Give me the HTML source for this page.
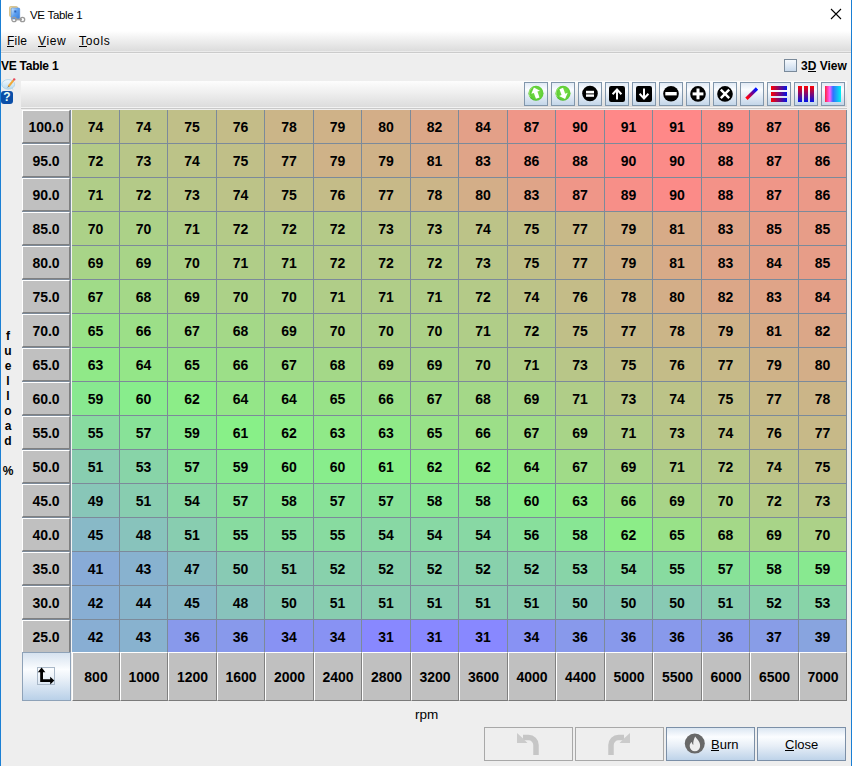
<!DOCTYPE html><html><head><meta charset="utf-8"><style>
*{margin:0;padding:0;box-sizing:border-box}
html,body{width:852px;height:766px;overflow:hidden;background:#eeeeee;font-family:"Liberation Sans",sans-serif;color:#000}
.a{position:absolute}
.t{position:absolute;white-space:nowrap;line-height:1}
.c{position:absolute;font-weight:bold;font-size:14px;text-align:center;line-height:35px}
.rh{position:absolute;background:#c0c0c0;border-left:1px solid #fff;border-top:1px solid #fff;border-right:1px solid #808080;border-bottom:1px solid #808080;font-weight:bold;font-size:14px;text-align:center;line-height:33px}
.ch{position:absolute;background:#c0c0c0;border-left:1px solid #fff;border-top:1px solid #fff;border-right:1px solid #808080;border-bottom:1px solid #7a7a7a;font-weight:bold;font-size:14px;text-align:center;line-height:48px}
.tb{position:absolute;top:82px;width:24px;height:24px;border:1px solid #8196ab;background:linear-gradient(#e2ebf5,#fafcff 30%,#e6eef7 55%,#c4d6e9)}
.btn{position:absolute;top:727px;height:34px;border:1px solid #7b8fa7;background:linear-gradient(#dbe6f2,#fbfdff 28%,#e8eff7 55%,#bed3e9);font-size:13px}
.dis{position:absolute;top:727px;height:34px;border:1px solid #a8a8a8;background:#eeeeee}
u{text-decoration:none;border-bottom:1px solid #000}
</style></head><body>
<div class="a" style="left:0;top:0;width:852px;height:31px;background:#fff"></div>
<div class="a" style="left:0;top:31px;width:852px;height:20px;background:linear-gradient(#ffffff,#f2f2f2 35%,#dcdcdc)"></div>
<div class="a" style="left:0;top:51px;width:852px;height:1px;background:#ebebeb"></div>
<div class="a" style="left:0;top:52px;width:852px;height:1px;background:#cbcbcb"></div>
<div class="a" style="left:0;top:53px;width:852px;height:1px;background:#f4f4f4"></div>
<svg class="a" style="left:8px;top:5px" width="18" height="18" viewBox="0 0 18 18">
<defs><linearGradient id="dg" x1="0" y1="0" x2="1" y2="1"><stop offset="0" stop-color="#d8ecff"/><stop offset="0.5" stop-color="#5a9ef0"/><stop offset="1" stop-color="#3a7ed8"/></linearGradient></defs>
<rect x="1.5" y="1.5" width="8" height="10" rx="1" fill="#e8d49c" stroke="#d2ba80" stroke-width="0.8"/>
<rect x="3.2" y="3" width="8.5" height="11" rx="1" fill="url(#dg)" stroke="#4a88d8" stroke-width="0.6"/>
<rect x="6.3" y="5.5" width="2" height="2" fill="#2a62b8"/>
<path d="M7 14.5h7" stroke="#a0a0a0" stroke-width="1.8"/>
<circle cx="6" cy="14.5" r="2.2" fill="none" stroke="#9a9a9a" stroke-width="1.3"/>
<circle cx="14.5" cy="14.5" r="2.2" fill="none" stroke="#9a9a9a" stroke-width="1.3"/>
</svg>
<div class="t" style="left:30px;top:9.5px;font-size:11.5px;letter-spacing:-0.3px">VE Table 1</div>
<svg class="a" style="left:830px;top:8px" width="12" height="12" viewBox="0 0 12 12"><path d="M1 1L11 11M11 1L1 11" stroke="#000" stroke-width="1.1"/></svg>
<div class="t" style="left:7px;top:35px;font-size:12px;letter-spacing:0.2px">File</div>
<div class="t" style="left:38px;top:35px;font-size:12px;letter-spacing:0.6px">View</div>
<div class="t" style="left:79px;top:35px;font-size:12px;letter-spacing:0.7px">Tools</div>
<div class="a" style="left:7px;top:46px;width:7px;height:1px;background:#000"></div>
<div class="a" style="left:38px;top:46px;width:8px;height:1px;background:#000"></div>
<div class="a" style="left:79px;top:46px;width:8px;height:1px;background:#000"></div>
<div class="t" style="left:1px;top:60px;font-size:12px;font-weight:bold;letter-spacing:-0.25px">VE Table 1</div>
<div class="a" style="left:784px;top:59px;width:13px;height:13px;border:1px solid #7a8a9a;background:linear-gradient(#f7fafd,#c8d9ec)"></div>
<div class="t" style="left:801px;top:60px;font-size:12px;font-weight:bold">3D View</div>
<div class="a" style="left:808px;top:71px;width:8px;height:1px;background:#000"></div>
<svg class="a" style="left:1px;top:77px" width="16" height="14" viewBox="0 0 16 14">
<defs><linearGradient id="bg1" x1="0" y1="0" x2="0" y2="1"><stop offset="0" stop-color="#f4faff"/><stop offset="1" stop-color="#b6d9ee"/></linearGradient></defs>
<ellipse cx="7.2" cy="7.4" rx="6.4" ry="4.8" fill="url(#bg1)" stroke="#a8cfe4" stroke-width="0.8"/>
<path d="M10 11.5l2.5 1.5-1-2.5z" fill="#b6d9ee"/>
<path d="M7.5 9.5L12.6 3.2" stroke="#f0a838" stroke-width="2"/>
<path d="M6.8 10.4l0.9-1.3" stroke="#777" stroke-width="1"/>
<circle cx="13.2" cy="2.4" r="1.2" fill="#e84858"/>
</svg>
<div class="a" style="left:1px;top:91px;width:12px;height:13px;border-radius:3px;background:#0b4fa8;color:#e8fff8;font-weight:bold;font-size:12px;line-height:13px;text-align:center">?</div>
<div class="a" style="left:21px;top:81px;width:826px;height:26px;background:linear-gradient(#fdfdfd,#efefef 45%,#dcdcdc)"></div>
<div class="a" style="left:21px;top:107px;width:826px;height:1px;background:#f2f2f2"></div>
<div class="a" style="left:21px;top:108px;width:826px;height:1px;background:#c9c9c9"></div>
<div class="tb" style="left:524px"></div>
<div class="tb" style="left:551px"></div>
<div class="tb" style="left:578px"></div>
<div class="tb" style="left:605px"></div>
<div class="tb" style="left:632px"></div>
<div class="tb" style="left:659px"></div>
<div class="tb" style="left:686px"></div>
<div class="tb" style="left:713px"></div>
<div class="tb" style="left:740px"></div>
<div class="tb" style="left:767px"></div>
<div class="tb" style="left:794px"></div>
<div class="tb" style="left:821px"></div>
<svg class="a" style="left:524px;top:82px" width="24" height="24" viewBox="0 0 24 24"><defs><radialGradient id="g1" cx="0.55" cy="0.45" r="0.6"><stop offset="0" stop-color="#7ee04c"/><stop offset="0.8" stop-color="#5ccc34"/><stop offset="1" stop-color="#3fa824"/></radialGradient></defs><circle cx="12" cy="11.3" r="7.5" fill="url(#g1)"/><path d="M6.2 15a6.8 6.8 0 0 1 2.2-9.6" stroke="#a8ec80" stroke-width="0.9" fill="none"/><path d="M12 5.2L16.6 10.2H13.9V16.4H10.1V10.2H7.4z" fill="#fff" transform="rotate(-20 12 11.3)"/></svg>
<svg class="a" style="left:551px;top:82px" width="24" height="24" viewBox="0 0 24 24"><defs><radialGradient id="g2" cx="0.55" cy="0.45" r="0.6"><stop offset="0" stop-color="#7ee04c"/><stop offset="0.8" stop-color="#5ccc34"/><stop offset="1" stop-color="#3fa824"/></radialGradient></defs><circle cx="12" cy="11.3" r="7.5" fill="url(#g2)"/><path d="M6.2 15a6.8 6.8 0 0 1 2.2-9.6" stroke="#a8ec80" stroke-width="0.9" fill="none"/><path d="M12 17.4L16.6 12.4H13.9V6.2H10.1V12.4H7.4z" fill="#fff" transform="rotate(-20 12 11.3)"/></svg>
<svg class="a" style="left:578px;top:82px" width="24" height="24" viewBox="0 0 24 24"><circle cx="12" cy="11.5" r="7.8" fill="#000"/><rect x="8" y="8.8" width="8" height="2.6" fill="#fff"/><rect x="8" y="12.4" width="8" height="2.4" fill="#fff"/></svg>
<svg class="a" style="left:605px;top:82px" width="24" height="24" viewBox="0 0 24 24"><rect x="4" y="4" width="16" height="16" rx="2.2" fill="#000"/><path d="M12 17.5V7.5M7.6 12.2L12 7.5l4.4 4.7" fill="none" stroke="#fff" stroke-width="2"/></svg>
<svg class="a" style="left:632px;top:82px" width="24" height="24" viewBox="0 0 24 24"><rect x="4" y="4" width="16" height="16" rx="2.2" fill="#000"/><path d="M12 6.5v10M7.6 11.8L12 16.5l4.4-4.7" fill="none" stroke="#fff" stroke-width="2"/></svg>
<svg class="a" style="left:659px;top:82px" width="24" height="24" viewBox="0 0 24 24"><circle cx="12" cy="11.7" r="7.8" fill="#000"/><rect x="6.3" y="10" width="11.4" height="3.4" fill="#fff"/></svg>
<svg class="a" style="left:686px;top:82px" width="24" height="24" viewBox="0 0 24 24"><circle cx="12" cy="11.9" r="7.8" fill="#000"/><rect x="6.6" y="10.4" width="10.8" height="3" fill="#fff"/><rect x="10.5" y="6.5" width="3" height="10.8" fill="#fff"/></svg>
<svg class="a" style="left:713px;top:82px" width="24" height="24" viewBox="0 0 24 24"><circle cx="12" cy="11.9" r="7.8" fill="#000"/><path d="M7.8 7.7l8.4 8.4M16.2 7.7l-8.4 8.4" stroke="#fff" stroke-width="2.4"/></svg>
<svg class="a" style="left:740px;top:82px" width="24" height="24" viewBox="0 0 24 24"><defs><linearGradient id="pg" x1="0" y1="1" x2="1" y2="0"><stop offset="0" stop-color="#ff0010"/><stop offset="0.5" stop-color="#800080"/><stop offset="1" stop-color="#0010ff"/></linearGradient></defs><path d="M7.6 15.6L15.8 7.6" stroke="url(#pg)" stroke-width="3.3" stroke-linecap="square"/></svg>
<svg class="a" style="left:767px;top:82px" width="24" height="24" viewBox="0 0 24 24"><defs><linearGradient id="hg"><stop offset="0" stop-color="#ff0000"/><stop offset="1" stop-color="#0014e6"/></linearGradient></defs><rect x="4" y="4" width="16" height="4" fill="url(#hg)"/><rect x="4" y="10" width="16" height="4" fill="url(#hg)"/><rect x="4" y="16" width="16" height="4" fill="url(#hg)"/></svg>
<svg class="a" style="left:794px;top:82px" width="24" height="24" viewBox="0 0 24 24"><defs><linearGradient id="vg" x1="0" y1="0" x2="0" y2="1"><stop offset="0" stop-color="#ff0000"/><stop offset="1" stop-color="#0014e6"/></linearGradient></defs><rect x="4" y="4" width="4" height="16" fill="url(#vg)"/><rect x="10" y="4" width="4" height="16" fill="url(#vg)"/><rect x="16" y="4" width="4" height="16" fill="url(#vg)"/></svg>
<svg class="a" style="left:821px;top:82px" width="24" height="24" viewBox="0 0 24 24"><defs><linearGradient id="gg"><stop offset="0" stop-color="#ff2040"/><stop offset="0.3" stop-color="#ff60ff"/><stop offset="0.5" stop-color="#3070ff"/><stop offset="1" stop-color="#00f0f0"/></linearGradient></defs><rect x="4" y="4" width="16" height="16" fill="url(#gg)"/></svg>
<div class="rh" style="left:22px;top:110px;width:48px;height:33px">100.0</div>
<div class="a" style="left:22px;top:143px;width:48px;height:1px;background:#7c8a9a"></div>
<div class="rh" style="left:22px;top:144px;width:48px;height:33px">95.0</div>
<div class="a" style="left:22px;top:177px;width:48px;height:1px;background:#7c8a9a"></div>
<div class="rh" style="left:22px;top:178px;width:48px;height:33px">90.0</div>
<div class="a" style="left:22px;top:211px;width:48px;height:1px;background:#7c8a9a"></div>
<div class="rh" style="left:22px;top:212px;width:48px;height:33px">85.0</div>
<div class="a" style="left:22px;top:245px;width:48px;height:1px;background:#7c8a9a"></div>
<div class="rh" style="left:22px;top:246px;width:48px;height:33px">80.0</div>
<div class="a" style="left:22px;top:279px;width:48px;height:1px;background:#7c8a9a"></div>
<div class="rh" style="left:22px;top:280px;width:48px;height:33px">75.0</div>
<div class="a" style="left:22px;top:313px;width:48px;height:1px;background:#7c8a9a"></div>
<div class="rh" style="left:22px;top:314px;width:48px;height:33px">70.0</div>
<div class="a" style="left:22px;top:347px;width:48px;height:1px;background:#7c8a9a"></div>
<div class="rh" style="left:22px;top:348px;width:48px;height:33px">65.0</div>
<div class="a" style="left:22px;top:381px;width:48px;height:1px;background:#7c8a9a"></div>
<div class="rh" style="left:22px;top:382px;width:48px;height:33px">60.0</div>
<div class="a" style="left:22px;top:415px;width:48px;height:1px;background:#7c8a9a"></div>
<div class="rh" style="left:22px;top:416px;width:48px;height:33px">55.0</div>
<div class="a" style="left:22px;top:449px;width:48px;height:1px;background:#7c8a9a"></div>
<div class="rh" style="left:22px;top:450px;width:48px;height:33px">50.0</div>
<div class="a" style="left:22px;top:483px;width:48px;height:1px;background:#7c8a9a"></div>
<div class="rh" style="left:22px;top:484px;width:48px;height:33px">45.0</div>
<div class="a" style="left:22px;top:517px;width:48px;height:1px;background:#7c8a9a"></div>
<div class="rh" style="left:22px;top:518px;width:48px;height:33px">40.0</div>
<div class="a" style="left:22px;top:551px;width:48px;height:1px;background:#7c8a9a"></div>
<div class="rh" style="left:22px;top:552px;width:48px;height:33px">35.0</div>
<div class="a" style="left:22px;top:585px;width:48px;height:1px;background:#7c8a9a"></div>
<div class="rh" style="left:22px;top:586px;width:48px;height:33px">30.0</div>
<div class="a" style="left:22px;top:619px;width:48px;height:1px;background:#7c8a9a"></div>
<div class="rh" style="left:22px;top:620px;width:48px;height:33px">25.0</div>
<div class="a" style="left:22px;top:653px;width:48px;height:1px;background:#7c8a9a"></div>
<div class="a" style="left:70px;top:110px;width:1px;height:542px;background:#7c8a9a"></div>
<div class="a" style="left:71px;top:110px;width:1px;height:542px;background:#f4f4f4"></div>
<div class="c" style="left:72px;top:110px;width:47px;height:33px;background:#bcc388">74</div>
<div class="c" style="left:120px;top:110px;width:47px;height:33px;background:#bcc388">74</div>
<div class="c" style="left:168px;top:110px;width:48px;height:33px;background:#c0bf88">75</div>
<div class="c" style="left:217px;top:110px;width:47px;height:33px;background:#c4bc88">76</div>
<div class="c" style="left:265px;top:110px;width:48px;height:33px;background:#cbb588">78</div>
<div class="c" style="left:314px;top:110px;width:47px;height:33px;background:#cfb288">79</div>
<div class="c" style="left:362px;top:110px;width:48px;height:33px;background:#d3ae88">80</div>
<div class="c" style="left:411px;top:110px;width:47px;height:33px;background:#dba788">82</div>
<div class="c" style="left:459px;top:110px;width:48px;height:33px;background:#e3a088">84</div>
<div class="c" style="left:508px;top:110px;width:47px;height:33px;background:#ef9688">87</div>
<div class="c" style="left:556px;top:110px;width:48px;height:33px;background:#fb8b88">90</div>
<div class="c" style="left:605px;top:110px;width:47px;height:33px;background:#ff8888">91</div>
<div class="c" style="left:653px;top:110px;width:48px;height:33px;background:#ff8888">91</div>
<div class="c" style="left:702px;top:110px;width:47px;height:33px;background:#f78f88">89</div>
<div class="c" style="left:750px;top:110px;width:48px;height:33px;background:#ef9688">87</div>
<div class="c" style="left:799px;top:110px;width:47px;height:33px;background:#eb9988">86</div>
<div class="c" style="left:72px;top:144px;width:47px;height:33px;background:#b4ca88">72</div>
<div class="c" style="left:120px;top:144px;width:47px;height:33px;background:#b8c688">73</div>
<div class="c" style="left:168px;top:144px;width:48px;height:33px;background:#bcc388">74</div>
<div class="c" style="left:217px;top:144px;width:47px;height:33px;background:#c0bf88">75</div>
<div class="c" style="left:265px;top:144px;width:48px;height:33px;background:#c7b988">77</div>
<div class="c" style="left:314px;top:144px;width:47px;height:33px;background:#cfb288">79</div>
<div class="c" style="left:362px;top:144px;width:48px;height:33px;background:#cfb288">79</div>
<div class="c" style="left:411px;top:144px;width:47px;height:33px;background:#d7ab88">81</div>
<div class="c" style="left:459px;top:144px;width:48px;height:33px;background:#dfa488">83</div>
<div class="c" style="left:508px;top:144px;width:47px;height:33px;background:#eb9988">86</div>
<div class="c" style="left:556px;top:144px;width:48px;height:33px;background:#f39288">88</div>
<div class="c" style="left:605px;top:144px;width:47px;height:33px;background:#fb8b88">90</div>
<div class="c" style="left:653px;top:144px;width:48px;height:33px;background:#fb8b88">90</div>
<div class="c" style="left:702px;top:144px;width:47px;height:33px;background:#f39288">88</div>
<div class="c" style="left:750px;top:144px;width:48px;height:33px;background:#ef9688">87</div>
<div class="c" style="left:799px;top:144px;width:47px;height:33px;background:#eb9988">86</div>
<div class="c" style="left:72px;top:178px;width:47px;height:33px;background:#b0cd88">71</div>
<div class="c" style="left:120px;top:178px;width:47px;height:33px;background:#b4ca88">72</div>
<div class="c" style="left:168px;top:178px;width:48px;height:33px;background:#b8c688">73</div>
<div class="c" style="left:217px;top:178px;width:47px;height:33px;background:#bcc388">74</div>
<div class="c" style="left:265px;top:178px;width:48px;height:33px;background:#c0bf88">75</div>
<div class="c" style="left:314px;top:178px;width:47px;height:33px;background:#c4bc88">76</div>
<div class="c" style="left:362px;top:178px;width:48px;height:33px;background:#c7b988">77</div>
<div class="c" style="left:411px;top:178px;width:47px;height:33px;background:#cbb588">78</div>
<div class="c" style="left:459px;top:178px;width:48px;height:33px;background:#d3ae88">80</div>
<div class="c" style="left:508px;top:178px;width:47px;height:33px;background:#dfa488">83</div>
<div class="c" style="left:556px;top:178px;width:48px;height:33px;background:#ef9688">87</div>
<div class="c" style="left:605px;top:178px;width:47px;height:33px;background:#f78f88">89</div>
<div class="c" style="left:653px;top:178px;width:48px;height:33px;background:#fb8b88">90</div>
<div class="c" style="left:702px;top:178px;width:47px;height:33px;background:#f39288">88</div>
<div class="c" style="left:750px;top:178px;width:48px;height:33px;background:#ef9688">87</div>
<div class="c" style="left:799px;top:178px;width:47px;height:33px;background:#eb9988">86</div>
<div class="c" style="left:72px;top:212px;width:47px;height:33px;background:#acd188">70</div>
<div class="c" style="left:120px;top:212px;width:47px;height:33px;background:#acd188">70</div>
<div class="c" style="left:168px;top:212px;width:48px;height:33px;background:#b0cd88">71</div>
<div class="c" style="left:217px;top:212px;width:47px;height:33px;background:#b4ca88">72</div>
<div class="c" style="left:265px;top:212px;width:48px;height:33px;background:#b4ca88">72</div>
<div class="c" style="left:314px;top:212px;width:47px;height:33px;background:#b4ca88">72</div>
<div class="c" style="left:362px;top:212px;width:48px;height:33px;background:#b8c688">73</div>
<div class="c" style="left:411px;top:212px;width:47px;height:33px;background:#b8c688">73</div>
<div class="c" style="left:459px;top:212px;width:48px;height:33px;background:#bcc388">74</div>
<div class="c" style="left:508px;top:212px;width:47px;height:33px;background:#c0bf88">75</div>
<div class="c" style="left:556px;top:212px;width:48px;height:33px;background:#c7b988">77</div>
<div class="c" style="left:605px;top:212px;width:47px;height:33px;background:#cfb288">79</div>
<div class="c" style="left:653px;top:212px;width:48px;height:33px;background:#d7ab88">81</div>
<div class="c" style="left:702px;top:212px;width:47px;height:33px;background:#dfa488">83</div>
<div class="c" style="left:750px;top:212px;width:48px;height:33px;background:#e79d88">85</div>
<div class="c" style="left:799px;top:212px;width:47px;height:33px;background:#e79d88">85</div>
<div class="c" style="left:72px;top:246px;width:47px;height:33px;background:#a8d488">69</div>
<div class="c" style="left:120px;top:246px;width:47px;height:33px;background:#a8d488">69</div>
<div class="c" style="left:168px;top:246px;width:48px;height:33px;background:#acd188">70</div>
<div class="c" style="left:217px;top:246px;width:47px;height:33px;background:#b0cd88">71</div>
<div class="c" style="left:265px;top:246px;width:48px;height:33px;background:#b0cd88">71</div>
<div class="c" style="left:314px;top:246px;width:47px;height:33px;background:#b4ca88">72</div>
<div class="c" style="left:362px;top:246px;width:48px;height:33px;background:#b4ca88">72</div>
<div class="c" style="left:411px;top:246px;width:47px;height:33px;background:#b4ca88">72</div>
<div class="c" style="left:459px;top:246px;width:48px;height:33px;background:#b8c688">73</div>
<div class="c" style="left:508px;top:246px;width:47px;height:33px;background:#c0bf88">75</div>
<div class="c" style="left:556px;top:246px;width:48px;height:33px;background:#c7b988">77</div>
<div class="c" style="left:605px;top:246px;width:47px;height:33px;background:#cfb288">79</div>
<div class="c" style="left:653px;top:246px;width:48px;height:33px;background:#d7ab88">81</div>
<div class="c" style="left:702px;top:246px;width:47px;height:33px;background:#dfa488">83</div>
<div class="c" style="left:750px;top:246px;width:48px;height:33px;background:#e3a088">84</div>
<div class="c" style="left:799px;top:246px;width:47px;height:33px;background:#e79d88">85</div>
<div class="c" style="left:72px;top:280px;width:47px;height:33px;background:#a0db88">67</div>
<div class="c" style="left:120px;top:280px;width:47px;height:33px;background:#a4d888">68</div>
<div class="c" style="left:168px;top:280px;width:48px;height:33px;background:#a8d488">69</div>
<div class="c" style="left:217px;top:280px;width:47px;height:33px;background:#acd188">70</div>
<div class="c" style="left:265px;top:280px;width:48px;height:33px;background:#acd188">70</div>
<div class="c" style="left:314px;top:280px;width:47px;height:33px;background:#b0cd88">71</div>
<div class="c" style="left:362px;top:280px;width:48px;height:33px;background:#b0cd88">71</div>
<div class="c" style="left:411px;top:280px;width:47px;height:33px;background:#b0cd88">71</div>
<div class="c" style="left:459px;top:280px;width:48px;height:33px;background:#b4ca88">72</div>
<div class="c" style="left:508px;top:280px;width:47px;height:33px;background:#bcc388">74</div>
<div class="c" style="left:556px;top:280px;width:48px;height:33px;background:#c4bc88">76</div>
<div class="c" style="left:605px;top:280px;width:47px;height:33px;background:#cbb588">78</div>
<div class="c" style="left:653px;top:280px;width:48px;height:33px;background:#d3ae88">80</div>
<div class="c" style="left:702px;top:280px;width:47px;height:33px;background:#dba788">82</div>
<div class="c" style="left:750px;top:280px;width:48px;height:33px;background:#dfa488">83</div>
<div class="c" style="left:799px;top:280px;width:47px;height:33px;background:#e3a088">84</div>
<div class="c" style="left:72px;top:314px;width:47px;height:33px;background:#98e288">65</div>
<div class="c" style="left:120px;top:314px;width:47px;height:33px;background:#9cdf88">66</div>
<div class="c" style="left:168px;top:314px;width:48px;height:33px;background:#a0db88">67</div>
<div class="c" style="left:217px;top:314px;width:47px;height:33px;background:#a4d888">68</div>
<div class="c" style="left:265px;top:314px;width:48px;height:33px;background:#a8d488">69</div>
<div class="c" style="left:314px;top:314px;width:47px;height:33px;background:#acd188">70</div>
<div class="c" style="left:362px;top:314px;width:48px;height:33px;background:#acd188">70</div>
<div class="c" style="left:411px;top:314px;width:47px;height:33px;background:#acd188">70</div>
<div class="c" style="left:459px;top:314px;width:48px;height:33px;background:#b0cd88">71</div>
<div class="c" style="left:508px;top:314px;width:47px;height:33px;background:#b4ca88">72</div>
<div class="c" style="left:556px;top:314px;width:48px;height:33px;background:#c0bf88">75</div>
<div class="c" style="left:605px;top:314px;width:47px;height:33px;background:#c7b988">77</div>
<div class="c" style="left:653px;top:314px;width:48px;height:33px;background:#cbb588">78</div>
<div class="c" style="left:702px;top:314px;width:47px;height:33px;background:#cfb288">79</div>
<div class="c" style="left:750px;top:314px;width:48px;height:33px;background:#d7ab88">81</div>
<div class="c" style="left:799px;top:314px;width:47px;height:33px;background:#dba788">82</div>
<div class="c" style="left:72px;top:348px;width:47px;height:33px;background:#90e988">63</div>
<div class="c" style="left:120px;top:348px;width:47px;height:33px;background:#94e688">64</div>
<div class="c" style="left:168px;top:348px;width:48px;height:33px;background:#98e288">65</div>
<div class="c" style="left:217px;top:348px;width:47px;height:33px;background:#9cdf88">66</div>
<div class="c" style="left:265px;top:348px;width:48px;height:33px;background:#a0db88">67</div>
<div class="c" style="left:314px;top:348px;width:47px;height:33px;background:#a4d888">68</div>
<div class="c" style="left:362px;top:348px;width:48px;height:33px;background:#a8d488">69</div>
<div class="c" style="left:411px;top:348px;width:47px;height:33px;background:#a8d488">69</div>
<div class="c" style="left:459px;top:348px;width:48px;height:33px;background:#acd188">70</div>
<div class="c" style="left:508px;top:348px;width:47px;height:33px;background:#b0cd88">71</div>
<div class="c" style="left:556px;top:348px;width:48px;height:33px;background:#b8c688">73</div>
<div class="c" style="left:605px;top:348px;width:47px;height:33px;background:#c0bf88">75</div>
<div class="c" style="left:653px;top:348px;width:48px;height:33px;background:#c4bc88">76</div>
<div class="c" style="left:702px;top:348px;width:47px;height:33px;background:#c7b988">77</div>
<div class="c" style="left:750px;top:348px;width:48px;height:33px;background:#cfb288">79</div>
<div class="c" style="left:799px;top:348px;width:47px;height:33px;background:#d3ae88">80</div>
<div class="c" style="left:72px;top:382px;width:47px;height:33px;background:#88e990">59</div>
<div class="c" style="left:120px;top:382px;width:47px;height:33px;background:#88ed8c">60</div>
<div class="c" style="left:168px;top:382px;width:48px;height:33px;background:#8ced88">62</div>
<div class="c" style="left:217px;top:382px;width:47px;height:33px;background:#94e688">64</div>
<div class="c" style="left:265px;top:382px;width:48px;height:33px;background:#94e688">64</div>
<div class="c" style="left:314px;top:382px;width:47px;height:33px;background:#98e288">65</div>
<div class="c" style="left:362px;top:382px;width:48px;height:33px;background:#9cdf88">66</div>
<div class="c" style="left:411px;top:382px;width:47px;height:33px;background:#a0db88">67</div>
<div class="c" style="left:459px;top:382px;width:48px;height:33px;background:#a4d888">68</div>
<div class="c" style="left:508px;top:382px;width:47px;height:33px;background:#a8d488">69</div>
<div class="c" style="left:556px;top:382px;width:48px;height:33px;background:#b0cd88">71</div>
<div class="c" style="left:605px;top:382px;width:47px;height:33px;background:#b8c688">73</div>
<div class="c" style="left:653px;top:382px;width:48px;height:33px;background:#bcc388">74</div>
<div class="c" style="left:702px;top:382px;width:47px;height:33px;background:#c0bf88">75</div>
<div class="c" style="left:750px;top:382px;width:48px;height:33px;background:#c7b988">77</div>
<div class="c" style="left:799px;top:382px;width:47px;height:33px;background:#cbb588">78</div>
<div class="c" style="left:72px;top:416px;width:47px;height:33px;background:#88dba0">55</div>
<div class="c" style="left:120px;top:416px;width:47px;height:33px;background:#88e298">57</div>
<div class="c" style="left:168px;top:416px;width:48px;height:33px;background:#88e990">59</div>
<div class="c" style="left:217px;top:416px;width:47px;height:33px;background:#88f088">61</div>
<div class="c" style="left:265px;top:416px;width:48px;height:33px;background:#8ced88">62</div>
<div class="c" style="left:314px;top:416px;width:47px;height:33px;background:#90e988">63</div>
<div class="c" style="left:362px;top:416px;width:48px;height:33px;background:#90e988">63</div>
<div class="c" style="left:411px;top:416px;width:47px;height:33px;background:#98e288">65</div>
<div class="c" style="left:459px;top:416px;width:48px;height:33px;background:#9cdf88">66</div>
<div class="c" style="left:508px;top:416px;width:47px;height:33px;background:#a0db88">67</div>
<div class="c" style="left:556px;top:416px;width:48px;height:33px;background:#a8d488">69</div>
<div class="c" style="left:605px;top:416px;width:47px;height:33px;background:#b0cd88">71</div>
<div class="c" style="left:653px;top:416px;width:48px;height:33px;background:#b8c688">73</div>
<div class="c" style="left:702px;top:416px;width:47px;height:33px;background:#bcc388">74</div>
<div class="c" style="left:750px;top:416px;width:48px;height:33px;background:#c4bc88">76</div>
<div class="c" style="left:799px;top:416px;width:47px;height:33px;background:#c7b988">77</div>
<div class="c" style="left:72px;top:450px;width:47px;height:33px;background:#88cdb0">51</div>
<div class="c" style="left:120px;top:450px;width:47px;height:33px;background:#88d4a8">53</div>
<div class="c" style="left:168px;top:450px;width:48px;height:33px;background:#88e298">57</div>
<div class="c" style="left:217px;top:450px;width:47px;height:33px;background:#88e990">59</div>
<div class="c" style="left:265px;top:450px;width:48px;height:33px;background:#88ed8c">60</div>
<div class="c" style="left:314px;top:450px;width:47px;height:33px;background:#88ed8c">60</div>
<div class="c" style="left:362px;top:450px;width:48px;height:33px;background:#88f088">61</div>
<div class="c" style="left:411px;top:450px;width:47px;height:33px;background:#8ced88">62</div>
<div class="c" style="left:459px;top:450px;width:48px;height:33px;background:#8ced88">62</div>
<div class="c" style="left:508px;top:450px;width:47px;height:33px;background:#94e688">64</div>
<div class="c" style="left:556px;top:450px;width:48px;height:33px;background:#a0db88">67</div>
<div class="c" style="left:605px;top:450px;width:47px;height:33px;background:#a8d488">69</div>
<div class="c" style="left:653px;top:450px;width:48px;height:33px;background:#b0cd88">71</div>
<div class="c" style="left:702px;top:450px;width:47px;height:33px;background:#b4ca88">72</div>
<div class="c" style="left:750px;top:450px;width:48px;height:33px;background:#bcc388">74</div>
<div class="c" style="left:799px;top:450px;width:47px;height:33px;background:#c0bf88">75</div>
<div class="c" style="left:72px;top:484px;width:47px;height:33px;background:#88c6b8">49</div>
<div class="c" style="left:120px;top:484px;width:47px;height:33px;background:#88cdb0">51</div>
<div class="c" style="left:168px;top:484px;width:48px;height:33px;background:#88d8a4">54</div>
<div class="c" style="left:217px;top:484px;width:47px;height:33px;background:#88e298">57</div>
<div class="c" style="left:265px;top:484px;width:48px;height:33px;background:#88e694">58</div>
<div class="c" style="left:314px;top:484px;width:47px;height:33px;background:#88e298">57</div>
<div class="c" style="left:362px;top:484px;width:48px;height:33px;background:#88e298">57</div>
<div class="c" style="left:411px;top:484px;width:47px;height:33px;background:#88e694">58</div>
<div class="c" style="left:459px;top:484px;width:48px;height:33px;background:#88e694">58</div>
<div class="c" style="left:508px;top:484px;width:47px;height:33px;background:#88ed8c">60</div>
<div class="c" style="left:556px;top:484px;width:48px;height:33px;background:#90e988">63</div>
<div class="c" style="left:605px;top:484px;width:47px;height:33px;background:#9cdf88">66</div>
<div class="c" style="left:653px;top:484px;width:48px;height:33px;background:#a8d488">69</div>
<div class="c" style="left:702px;top:484px;width:47px;height:33px;background:#acd188">70</div>
<div class="c" style="left:750px;top:484px;width:48px;height:33px;background:#b4ca88">72</div>
<div class="c" style="left:799px;top:484px;width:47px;height:33px;background:#b8c688">73</div>
<div class="c" style="left:72px;top:518px;width:47px;height:33px;background:#88b9c7">45</div>
<div class="c" style="left:120px;top:518px;width:47px;height:33px;background:#88c3bc">48</div>
<div class="c" style="left:168px;top:518px;width:48px;height:33px;background:#88cdb0">51</div>
<div class="c" style="left:217px;top:518px;width:47px;height:33px;background:#88dba0">55</div>
<div class="c" style="left:265px;top:518px;width:48px;height:33px;background:#88dba0">55</div>
<div class="c" style="left:314px;top:518px;width:47px;height:33px;background:#88dba0">55</div>
<div class="c" style="left:362px;top:518px;width:48px;height:33px;background:#88d8a4">54</div>
<div class="c" style="left:411px;top:518px;width:47px;height:33px;background:#88d8a4">54</div>
<div class="c" style="left:459px;top:518px;width:48px;height:33px;background:#88d8a4">54</div>
<div class="c" style="left:508px;top:518px;width:47px;height:33px;background:#88df9c">56</div>
<div class="c" style="left:556px;top:518px;width:48px;height:33px;background:#88e694">58</div>
<div class="c" style="left:605px;top:518px;width:47px;height:33px;background:#8ced88">62</div>
<div class="c" style="left:653px;top:518px;width:48px;height:33px;background:#98e288">65</div>
<div class="c" style="left:702px;top:518px;width:47px;height:33px;background:#a4d888">68</div>
<div class="c" style="left:750px;top:518px;width:48px;height:33px;background:#a8d488">69</div>
<div class="c" style="left:799px;top:518px;width:47px;height:33px;background:#acd188">70</div>
<div class="c" style="left:72px;top:552px;width:47px;height:33px;background:#88abd7">41</div>
<div class="c" style="left:120px;top:552px;width:47px;height:33px;background:#88b2cf">43</div>
<div class="c" style="left:168px;top:552px;width:48px;height:33px;background:#88bfc0">47</div>
<div class="c" style="left:217px;top:552px;width:47px;height:33px;background:#88cab4">50</div>
<div class="c" style="left:265px;top:552px;width:48px;height:33px;background:#88cdb0">51</div>
<div class="c" style="left:314px;top:552px;width:47px;height:33px;background:#88d1ac">52</div>
<div class="c" style="left:362px;top:552px;width:48px;height:33px;background:#88d1ac">52</div>
<div class="c" style="left:411px;top:552px;width:47px;height:33px;background:#88d1ac">52</div>
<div class="c" style="left:459px;top:552px;width:48px;height:33px;background:#88d1ac">52</div>
<div class="c" style="left:508px;top:552px;width:47px;height:33px;background:#88d1ac">52</div>
<div class="c" style="left:556px;top:552px;width:48px;height:33px;background:#88d4a8">53</div>
<div class="c" style="left:605px;top:552px;width:47px;height:33px;background:#88d8a4">54</div>
<div class="c" style="left:653px;top:552px;width:48px;height:33px;background:#88dba0">55</div>
<div class="c" style="left:702px;top:552px;width:47px;height:33px;background:#88e298">57</div>
<div class="c" style="left:750px;top:552px;width:48px;height:33px;background:#88e694">58</div>
<div class="c" style="left:799px;top:552px;width:47px;height:33px;background:#88e990">59</div>
<div class="c" style="left:72px;top:586px;width:47px;height:33px;background:#88aed3">42</div>
<div class="c" style="left:120px;top:586px;width:47px;height:33px;background:#88b5cb">44</div>
<div class="c" style="left:168px;top:586px;width:48px;height:33px;background:#88b9c7">45</div>
<div class="c" style="left:217px;top:586px;width:47px;height:33px;background:#88c3bc">48</div>
<div class="c" style="left:265px;top:586px;width:48px;height:33px;background:#88cab4">50</div>
<div class="c" style="left:314px;top:586px;width:47px;height:33px;background:#88cdb0">51</div>
<div class="c" style="left:362px;top:586px;width:48px;height:33px;background:#88cdb0">51</div>
<div class="c" style="left:411px;top:586px;width:47px;height:33px;background:#88cdb0">51</div>
<div class="c" style="left:459px;top:586px;width:48px;height:33px;background:#88cdb0">51</div>
<div class="c" style="left:508px;top:586px;width:47px;height:33px;background:#88cdb0">51</div>
<div class="c" style="left:556px;top:586px;width:48px;height:33px;background:#88cab4">50</div>
<div class="c" style="left:605px;top:586px;width:47px;height:33px;background:#88cab4">50</div>
<div class="c" style="left:653px;top:586px;width:48px;height:33px;background:#88cab4">50</div>
<div class="c" style="left:702px;top:586px;width:47px;height:33px;background:#88cdb0">51</div>
<div class="c" style="left:750px;top:586px;width:48px;height:33px;background:#88d1ac">52</div>
<div class="c" style="left:799px;top:586px;width:47px;height:33px;background:#88d4a8">53</div>
<div class="c" style="left:72px;top:620px;width:47px;height:33px;background:#88aed3">42</div>
<div class="c" style="left:120px;top:620px;width:47px;height:33px;background:#88b2cf">43</div>
<div class="c" style="left:168px;top:620px;width:48px;height:33px;background:#8899eb">36</div>
<div class="c" style="left:217px;top:620px;width:47px;height:33px;background:#8899eb">36</div>
<div class="c" style="left:265px;top:620px;width:48px;height:33px;background:#8892f3">34</div>
<div class="c" style="left:314px;top:620px;width:47px;height:33px;background:#8892f3">34</div>
<div class="c" style="left:362px;top:620px;width:48px;height:33px;background:#8888ff">31</div>
<div class="c" style="left:411px;top:620px;width:47px;height:33px;background:#8888ff">31</div>
<div class="c" style="left:459px;top:620px;width:48px;height:33px;background:#8888ff">31</div>
<div class="c" style="left:508px;top:620px;width:47px;height:33px;background:#8892f3">34</div>
<div class="c" style="left:556px;top:620px;width:48px;height:33px;background:#8899eb">36</div>
<div class="c" style="left:605px;top:620px;width:47px;height:33px;background:#8899eb">36</div>
<div class="c" style="left:653px;top:620px;width:48px;height:33px;background:#8899eb">36</div>
<div class="c" style="left:702px;top:620px;width:47px;height:33px;background:#8899eb">36</div>
<div class="c" style="left:750px;top:620px;width:48px;height:33px;background:#889de7">37</div>
<div class="c" style="left:799px;top:620px;width:47px;height:33px;background:#88a4df">39</div>
<div class="a" style="left:72px;top:143px;width:775px;height:1px;background:#7c8a9a"></div>
<div class="a" style="left:72px;top:177px;width:775px;height:1px;background:#7c8a9a"></div>
<div class="a" style="left:72px;top:211px;width:775px;height:1px;background:#7c8a9a"></div>
<div class="a" style="left:72px;top:245px;width:775px;height:1px;background:#7c8a9a"></div>
<div class="a" style="left:72px;top:279px;width:775px;height:1px;background:#7c8a9a"></div>
<div class="a" style="left:72px;top:313px;width:775px;height:1px;background:#7c8a9a"></div>
<div class="a" style="left:72px;top:347px;width:775px;height:1px;background:#7c8a9a"></div>
<div class="a" style="left:72px;top:381px;width:775px;height:1px;background:#7c8a9a"></div>
<div class="a" style="left:72px;top:415px;width:775px;height:1px;background:#7c8a9a"></div>
<div class="a" style="left:72px;top:449px;width:775px;height:1px;background:#7c8a9a"></div>
<div class="a" style="left:72px;top:483px;width:775px;height:1px;background:#7c8a9a"></div>
<div class="a" style="left:72px;top:517px;width:775px;height:1px;background:#7c8a9a"></div>
<div class="a" style="left:72px;top:551px;width:775px;height:1px;background:#7c8a9a"></div>
<div class="a" style="left:72px;top:585px;width:775px;height:1px;background:#7c8a9a"></div>
<div class="a" style="left:72px;top:619px;width:775px;height:1px;background:#7c8a9a"></div>
<div class="a" style="left:119px;top:110px;width:1px;height:542px;background:#7c8a9a"></div>
<div class="a" style="left:167px;top:110px;width:1px;height:542px;background:#7c8a9a"></div>
<div class="a" style="left:216px;top:110px;width:1px;height:542px;background:#7c8a9a"></div>
<div class="a" style="left:264px;top:110px;width:1px;height:542px;background:#7c8a9a"></div>
<div class="a" style="left:313px;top:110px;width:1px;height:542px;background:#7c8a9a"></div>
<div class="a" style="left:361px;top:110px;width:1px;height:542px;background:#7c8a9a"></div>
<div class="a" style="left:410px;top:110px;width:1px;height:542px;background:#7c8a9a"></div>
<div class="a" style="left:458px;top:110px;width:1px;height:542px;background:#7c8a9a"></div>
<div class="a" style="left:507px;top:110px;width:1px;height:542px;background:#7c8a9a"></div>
<div class="a" style="left:555px;top:110px;width:1px;height:542px;background:#7c8a9a"></div>
<div class="a" style="left:604px;top:110px;width:1px;height:542px;background:#7c8a9a"></div>
<div class="a" style="left:652px;top:110px;width:1px;height:542px;background:#7c8a9a"></div>
<div class="a" style="left:701px;top:110px;width:1px;height:542px;background:#7c8a9a"></div>
<div class="a" style="left:749px;top:110px;width:1px;height:542px;background:#7c8a9a"></div>
<div class="a" style="left:798px;top:110px;width:1px;height:542px;background:#7c8a9a"></div>
<div class="a" style="left:846px;top:110px;width:1px;height:542px;background:#7c8a9a"></div>
<div class="a" style="left:22px;top:652px;width:49px;height:49px;border:1px solid #8ea2b8;background:linear-gradient(#d6e2ef,#fbfdff 35%,#e9f0f8 55%,#b9d0e8)"></div>
<svg class="a" style="left:36px;top:666px" width="20" height="20" viewBox="0 0 20 20">
<rect x="1.5" y="1.5" width="17" height="17" fill="none" stroke="#a9b8c8" stroke-width="1"/>
<path d="M5.6 5.5V14.6H15" fill="none" stroke="#000" stroke-width="2.8"/>
<path d="M5.6 1.6L1.8 6.2H9.4z" fill="#000"/><path d="M18.3 14.6L14.2 10.8V18.4z" fill="#000"/>
</svg>
<div class="a" style="left:71px;top:652px;width:776px;height:1px;background:#ffffff"></div>
<div class="ch" style="left:72px;top:652px;width:48px;height:49px">800</div>
<div class="ch" style="left:120px;top:652px;width:48px;height:49px">1000</div>
<div class="ch" style="left:168px;top:652px;width:49px;height:49px">1200</div>
<div class="ch" style="left:217px;top:652px;width:48px;height:49px">1600</div>
<div class="ch" style="left:265px;top:652px;width:49px;height:49px">2000</div>
<div class="ch" style="left:314px;top:652px;width:48px;height:49px">2400</div>
<div class="ch" style="left:362px;top:652px;width:49px;height:49px">2800</div>
<div class="ch" style="left:411px;top:652px;width:48px;height:49px">3200</div>
<div class="ch" style="left:459px;top:652px;width:49px;height:49px">3600</div>
<div class="ch" style="left:508px;top:652px;width:48px;height:49px">4000</div>
<div class="ch" style="left:556px;top:652px;width:49px;height:49px">4400</div>
<div class="ch" style="left:605px;top:652px;width:48px;height:49px">5000</div>
<div class="ch" style="left:653px;top:652px;width:49px;height:49px">5500</div>
<div class="ch" style="left:702px;top:652px;width:48px;height:49px">6000</div>
<div class="ch" style="left:750px;top:652px;width:49px;height:49px">6500</div>
<div class="ch" style="left:799px;top:652px;width:48px;height:49px">7000</div>
<div class="t" style="left:415px;top:708px;font-size:13.5px">rpm</div>
<div class="t" style="left:0;width:16px;text-align:center;top:330px;font-size:12px;font-weight:bold">f</div>
<div class="t" style="left:0;width:16px;text-align:center;top:345px;font-size:12px;font-weight:bold">u</div>
<div class="t" style="left:0;width:16px;text-align:center;top:360px;font-size:12px;font-weight:bold">e</div>
<div class="t" style="left:0;width:16px;text-align:center;top:375px;font-size:12px;font-weight:bold">l</div>
<div class="t" style="left:0;width:16px;text-align:center;top:390px;font-size:12px;font-weight:bold">l</div>
<div class="t" style="left:0;width:16px;text-align:center;top:405px;font-size:12px;font-weight:bold">o</div>
<div class="t" style="left:0;width:16px;text-align:center;top:420px;font-size:12px;font-weight:bold">a</div>
<div class="t" style="left:0;width:16px;text-align:center;top:435px;font-size:12px;font-weight:bold">d</div>
<div class="t" style="left:0;width:16px;text-align:center;top:465px;font-size:12px;font-weight:bold">%</div>
<div class="dis" style="left:484px;width:89px"></div>
<div class="dis" style="left:575px;width:89px"></div>
<svg class="a" style="left:516px;top:732px" width="24" height="24" viewBox="0 0 24 24"><path d="M7 5.5H12.5a7.5 7.5 0 0 1 7.5 7.5V23" stroke="#c6c6c6" stroke-width="5.5" fill="none"/><path d="M1 1V11H11.5L6 5.5z" fill="#cbcbcb"/></svg>
<svg class="a" style="left:607px;top:732px" width="24" height="24" viewBox="0 0 24 24"><path d="M17 5.5H11.5a7.5 7.5 0 0 0-7.5 7.5V23" stroke="#c6c6c6" stroke-width="5.5" fill="none"/><path d="M23 1V11H12.5L18 5.5z" fill="#cbcbcb"/></svg>
<div class="btn" style="left:666px;width:89px"></div>
<div class="btn" style="left:757px;width:89px"></div>
<svg class="a" style="left:684px;top:733px" width="22" height="22" viewBox="0 0 22 22"><circle cx="10.8" cy="10.6" r="10" fill="#686868"/><path d="M11.2 3.4C12.8 6 16.4 8.5 16.1 13A5.2 5.2 0 0 1 5.7 13C5.7 11 6.8 9.6 7.9 9C7.9 10.5 8.5 11.5 9.4 11.8C8.9 9 9.8 6 11.2 3.4z" fill="#eeeeee"/></svg>
<div class="t" style="left:711px;top:738px;font-size:13px">Burn</div>
<div class="t" style="left:785px;top:738px;font-size:13px">Close</div>
<div class="a" style="left:711px;top:750px;width:8px;height:1px;background:#000"></div>
<div class="a" style="left:785px;top:750px;width:9px;height:1px;background:#000"></div>
<div class="a" style="left:0;top:0;width:1px;height:766px;background:#1a7fd4"></div>
<div class="a" style="left:851px;top:0;width:1px;height:766px;background:#1a7fd4"></div>
</body></html>
